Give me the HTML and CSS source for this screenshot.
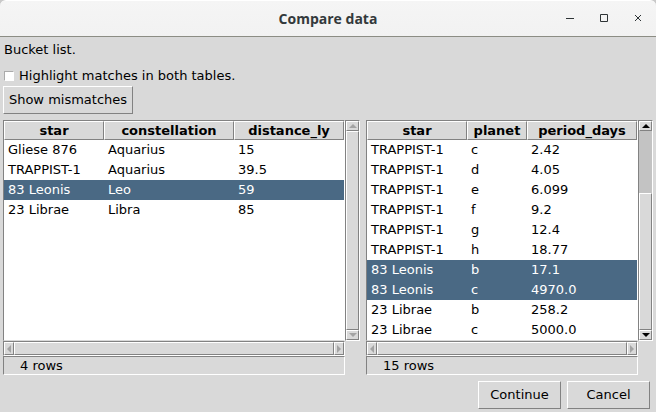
FILE: index.html
```html
<!DOCTYPE html>
<html lang="en">
<head>
    <meta charset="UTF-8">
    <meta name="viewport" content="width=device-width, initial-scale=1.0">
    <title>Compare data</title>
    <link rel="stylesheet" href="styles.css">
</head>
<body>
    <header class="titlebar">
        <h1>Compare data</h1>
        <div class="window-buttons">
            <button type="button" aria-label="Minimize"><svg width="10" height="10"><path d="M1 4.5h8" /></svg></button>
            <button type="button" aria-label="Maximize"><svg width="10" height="10"><path d="M1.5.5h7v7h-7z" /></svg></button>
            <button type="button" aria-label="Close"><svg width="10" height="10"><path d="M2 1l6 6M8 1l-6 6" /></svg></button>
        </div>
    </header>
    <main>
        <p class="message">Bucket list.</p>
        <label class="option"><input type="checkbox">Highlight matches in both tables.</label>
        <button type="button" class="btn show">Show mismatches</button>
        <div class="panes">
            <section class="pane">
                <div class="view">
                    <table>
                        <colgroup><col class="w100"><col class="w130"><col></colgroup>
                        <thead>
                            <tr><th>star</th><th>constellation</th><th>distance_ly</th></tr>
                        </thead>
                        <tbody>
                            <tr><td>Gliese 876</td><td>Aquarius</td><td>15</td></tr>
                            <tr><td>TRAPPIST-1</td><td>Aquarius</td><td>39.5</td></tr>
                            <tr class="selected"><td>83 Leonis</td><td>Leo</td><td>59</td></tr>
                            <tr><td>23 Librae</td><td>Libra</td><td>85</td></tr>
                        </tbody>
                    </table>
                </div>
                <div class="scroll vertical disabled">
                    <button type="button" aria-label="Scroll up"><svg width="8" height="4"><path d="M0 4L4 0l4 4z" /></svg></button>
                    <div class="track"><div class="thumb"></div></div>
                    <button type="button" aria-label="Scroll down"><svg width="8" height="4"><path d="M0 0h8L4 4z" /></svg></button>
                </div>
                <div class="scroll horizontal disabled">
                    <button type="button" aria-label="Scroll left"><svg width="4" height="8"><path d="M4 0v8L0 4z" /></svg></button>
                    <div class="track"><div class="thumb"></div></div>
                    <button type="button" aria-label="Scroll right"><svg width="4" height="8"><path d="M0 0l4 4-4 4z" /></svg></button>
                </div>
                <div class="status">4 rows</div>
            </section>
            <section class="pane">
                <div class="view">
                    <table>
                        <colgroup><col class="w100"><col class="w60"><col></colgroup>
                        <thead>
                            <tr><th>star</th><th>planet</th><th>period_days</th></tr>
                        </thead>
                        <tbody>
                            <tr><td>TRAPPIST-1</td><td>c</td><td>2.42</td></tr>
                            <tr><td>TRAPPIST-1</td><td>d</td><td>4.05</td></tr>
                            <tr><td>TRAPPIST-1</td><td>e</td><td>6.099</td></tr>
                            <tr><td>TRAPPIST-1</td><td>f</td><td>9.2</td></tr>
                            <tr><td>TRAPPIST-1</td><td>g</td><td>12.4</td></tr>
                            <tr><td>TRAPPIST-1</td><td>h</td><td>18.77</td></tr>
                            <tr class="selected"><td>83 Leonis</td><td>b</td><td>17.1</td></tr>
                            <tr class="selected"><td>83 Leonis</td><td>c</td><td>4970.0</td></tr>
                            <tr><td>23 Librae</td><td>b</td><td>258.2</td></tr>
                            <tr><td>23 Librae</td><td>c</td><td>5000.0</td></tr>
                        </tbody>
                    </table>
                </div>
                <div class="scroll vertical">
                    <button type="button" aria-label="Scroll up"><svg width="8" height="4"><path d="M0 4L4 0l4 4z" /></svg></button>
                    <div class="track"><div class="thumb" style="height: 69%"></div></div>
                    <button type="button" aria-label="Scroll down"><svg width="8" height="4"><path d="M0 0h8L4 4z" /></svg></button>
                </div>
                <div class="scroll horizontal disabled">
                    <button type="button" aria-label="Scroll left"><svg width="4" height="8"><path d="M4 0v8L0 4z" /></svg></button>
                    <div class="track"><div class="thumb"></div></div>
                    <button type="button" aria-label="Scroll right"><svg width="4" height="8"><path d="M0 0l4 4-4 4z" /></svg></button>
                </div>
                <div class="status">15 rows</div>
            </section>
        </div>
        <div class="actions">
            <button type="button" class="btn">Continue</button>
            <button type="button" class="btn">Cancel</button>
        </div>
    </main>
</body>
</html>
```
FILE: styles.css
```css
* { box-sizing: border-box; }
html { background: #c9c9c9; }
body {
    margin: 0;
    min-height: 100vh;
    display: flex;
    flex-direction: column;
    font: 13px/20px "DejaVu Sans", sans-serif;
    color: #000;
}
button, input { font: inherit; color: inherit; margin: 0; padding: 0; }

/* title bar */
.titlebar {
    display: grid;
    grid-template-columns: 1fr auto 1fr;
    align-items: center;
    height: 37px;
    background: linear-gradient(#f5f5f5, #f2f2f2);
    border-top: 1px solid #fff;
    border-bottom: 1px solid #8c8d84;
    border-radius: 6px 6px 0 0;
}
.titlebar h1 {
    grid-column: 2;
    margin: 0;
    font: bold 14px/20px "Open Sans", sans-serif;
    color: #33393b;
}
.window-buttons {
    display: flex;
    justify-content: flex-end;
    gap: 24px;
    padding-right: 13px;
}
.window-buttons button { display: flex; border: 0; background: none; }
.window-buttons svg { fill: none; stroke: #2e3436; }

main {
    flex: 1;
    display: flex;
    flex-direction: column;
    align-items: stretch;
    padding: 3px;
    background: #d9d9d9;
}
.message { margin: 0 1px 6px; }
.option { display: flex; align-items: center; gap: 5px; margin-left: 1px; }
.option input {
    appearance: none;
    width: 10px;
    height: 10px;
    background: #fff;
    border: 1px solid #fff;
    border-top-color: #aaa;
    border-left-color: #aaa;
}
.btn {
    height: 28px;
    width: 83px;
    background: #d9d9d9;
    border: 1px solid;
    border-color: #fff #828282 #828282 #fff;
}
.show { width: 130px; margin-bottom: 6px; }

/* tables */
.panes {
    flex: 1;
    display: grid;
    grid-template-columns: 357fr 287fr;
    gap: 6px;
}
.pane {
    display: grid;
    grid-template-columns: 1fr 15px;
    grid-template-rows: 1fr 15px 19px;
}
.view, .status, .scroll {
    border: 1px solid;
    border-color: #828282 #fff #fff #828282;
}
.view { background: #fff; border-bottom-color: #d9d9d9; }
table { width: 100%; table-layout: fixed; border-collapse: separate; border-spacing: 0; }
.w60 { width: 60px; }
.w100 { width: 100px; }
.w130 { width: 130px; }
th {
    height: 19px;
    padding: 0;
    line-height: 17px;
    background: #d9d9d9;
    border: 1px solid;
    border-color: #fff #828282 #828282 #fff;
}
td { height: 20px; padding: 0 4px; line-height: 20px; }
.selected { background: #4a6984; color: #fff; }

/* scrollbars */
.scroll { display: flex; background: #c3c3c3; }
.vertical { flex-direction: column; }
.horizontal { grid-column: 1; }
.scroll button, .thumb {
    background: #d9d9d9;
    border: 1px solid;
    border-color: #fff #828282 #828282 #fff;
}
.scroll button { display: flex; align-items: center; justify-content: center; }
.vertical button { height: 10px; }
.horizontal button { width: 10px; }
.track { flex: 1; display: flex; align-items: flex-end; }
.thumb { width: 100%; height: 100%; }
.disabled svg { fill: #a3a3a3; }
.status { grid-column: 1; padding-left: 16px; line-height: 17px; }

.actions {
    display: flex;
    justify-content: flex-end;
    gap: 6px;
    padding: 6px 3px 0;
}
```
